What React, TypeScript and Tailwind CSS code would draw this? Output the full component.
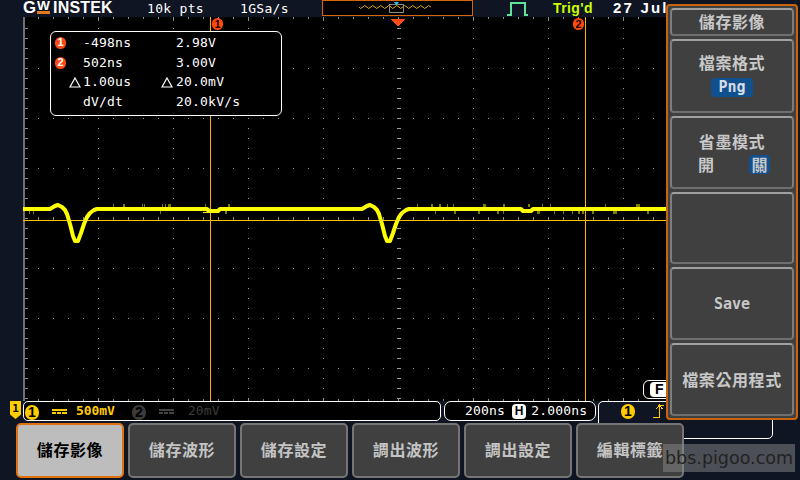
import React from "react";

const mono = "font-['DejaVu_Sans_Mono','Liberation_Mono',monospace]";
const cjk = "font-['Noto_Sans_CJK_TC','Noto_Sans_CJK_SC',sans-serif]";
const sans = "font-['Liberation_Sans',sans-serif]";

function range(a: number, b: number, s: number) {
  const out: number[] = [];
  for (let v = a; v <= b; v += s) out.push(v);
  return out;
}

const X0 = 23;
const Y0 = 17;

function dip(o: number) {
  const pts: [number, number][] = [
    [50, 209], [55, 206], [58, 205], [62, 207], [65, 210], [67, 214], [70, 224], [73, 236], [75, 241],
    [78, 241], [81, 233], [84, 224], [87, 217], [90, 213], [94, 210], [97, 209],
  ];
  return pts.map(([x, y]) => `L${x + o} ${y}`).join(" ");
}

const specksTop: [number, number][] = [
  [113, 1], [123, 2], [142, 1], [144, 1], [162, 1], [165, 1], [168, 3], [205, 1], [228, 2],
  [417, 1], [431, 2], [439, 2], [447, 1], [453, 1], [483, 3], [503, 2], [528, 2], [542, 1], [550, 1], [605, 1], [636, 4],
];
const specksBottom: [number, number][] = [
  [29, 1], [33, 1], [160, 1], [225, 2], [435, 1], [454, 2], [478, 2], [497, 2], [503, 1], [537, 3], [554, 1], [563, 1], [572, 1],
  [578, 2], [582, 2], [592, 2], [613, 4], [647, 2],
];

function ScopeGrid() {
  return (
    <svg width="645" height="384" viewBox="0 0 645 384" className="absolute inset-0" shapeRendering="crispEdges">
      {range(23, 645, 15).map((x) => (
        <rect key={"t" + x} x={x - X0} y={0} width={1} height={(x - 23) % 75 === 0 ? 4 : 2} fill="#8a8a8a" />
      ))}
      {range(23, 645, 15).map((x) => (
        <rect key={"b" + x} x={x - X0} y={382} width={1} height={2} fill="#8a8a8a" />
      ))}
      {range(28, 398, 10).map((y) => (
        <rect key={"l" + y} x={2} y={y - Y0} width={3} height={1} fill="#8a8a8a" />
      ))}
      {[68, 118, 168, 218, 268, 318, 368].map((y) =>
        range(38, 660, 15).map((x) => (
          <rect key={`r${y}-${x}`} x={x - X0} y={y - Y0 - (y === 218 ? 1 : 0)} width={1} height={y === 218 ? 3 : 1} fill={y === 218 ? "#8a8a8a" : "#a0a0a0"} />
        ))
      )}
      {[98, 173, 248, 323, 398, 473, 548, 623].map((x) =>
        range(28, 398, 10).map((y) => (
          <rect key={`c${x}-${y}`} x={x - X0 - (x === 398 ? 1 : 0)} y={y - Y0} width={x === 398 ? 4 : 1} height={1} fill="#a0a0a0" />
        ))
      )}
      <rect x={0} y={0} width={2} height={384} fill="#6f6f6f" />
      {specksTop.map(([x, w]) => (
        <rect key={"s" + x} x={x - X0} y={204 - Y0} width={w} height={3} fill="#7d7d00" />
      ))}
      {specksBottom.map(([x, w]) => (
        <rect key={"u" + x} x={x - X0} y={211 - Y0} width={w} height={3} fill="#7d7d00" />
      ))}
      <rect x={0} y={203} width={645} height={1} fill="#ffc400" />
      <rect x={187} y={0} width={1} height={384} fill="#ffb300" />
      <rect x={562} y={0} width={1} height={384} fill="#ffb300" />
      <rect x={203 - X0} y={212 - Y0} width={6} height={1} fill="#ffff00" />
      <g transform={`translate(${-X0} ${-Y0})`} shapeRendering="auto">
        <path
          d={`M23 209 ${dip(0)} L207 209 L209 211 L218 211 L220 209 ${dip(312)} L521 209 L523 211 L531 211 L533 209 L668 209`}
          stroke="#ffff00"
          strokeWidth={4}
          fill="none"
          strokeLinejoin="round"
        />
      </g>
      <polygon points="368,2 382,2 375,10" fill="#ff4a12" />
    </svg>
  );
}

function Dot({ n, top }: { n: string; top?: boolean }) {
  return (
    <span
      className={`flex items-center justify-center w-[11px] h-[12px] rounded-full bg-[#ff4a12] text-[11px] leading-none font-bold ${sans} ${top ? "text-[#1a0500]" : "text-white"}`}
    >
      {n}
    </span>
  );
}

function Delta() {
  return (
    <svg width="12" height="11" viewBox="0 0 12 11" className="ml-auto">
      <path d="M6 1 L11 10 H1 Z" fill="none" stroke="#fff" strokeWidth="1.2" />
    </svg>
  );
}

function Readout() {
  const rows: [React.ReactNode, string, React.ReactNode, string][] = [
    [<Dot n="1" />, "-498ns", null, "2.98V"],
    [<Dot n="2" />, "502ns", null, "3.00V"],
    [<Delta />, "1.00us", <Delta />, "20.0mV"],
    [null, "dV/dt", null, "20.0kV/s"],
  ];
  return (
    <div className={`absolute left-[27px] top-[14px] w-[232px] h-[85px] rounded-[6px] border border-white bg-black pl-[4px] pt-[1px] text-white text-[13px] font-medium ${mono}`}>
      {rows.map((r, i) => (
        <div key={i} className="flex items-center h-[19.7px]">
          <div className="w-[26px] flex items-center">{r[0]}</div>
          <div className="w-[80px] tracking-[0.2px] pl-[2px]">{r[1]}</div>
          <div className="w-[12px] flex items-center">{r[2]}</div>
          <div className="pl-[3px] tracking-[0.2px]">{r[3]}</div>
        </div>
      ))}
    </div>
  );
}

function MiniWave() {
  let d = "M36 6";
  for (let x = 36; x < 108; x += 4) d += ` q1 ${(x - 36) % 8 === 0 ? 3 : -3} 4 0`;
  return (
    <svg width="151" height="16" viewBox="0 0 151 16" className="absolute inset-0">
      <path d={d} stroke="#e8a800" strokeWidth="1" fill="none" />
      <rect x="66.5" y="3.5" width="14" height="8" fill="none" stroke="#8a8a8a" />
      <polygon points="71,1 76,1 73.5,4" fill="#22d3ee" />
    </svg>
  );
}

function Logo() {
  return (
    <div className={`w-[147px] pl-[23px] h-full flex items-start font-bold ${sans}`}>
      <span className="text-[16px] leading-[15px] w-[14px] scale-x-[1.05] origin-left">G</span>
      <span className="w-[16px] flex flex-col items-start">
        <span className="text-[13px] leading-[10px] mt-[1px] scale-x-[1.05] origin-left">W</span>
        <span className="w-[13px] h-[3px] bg-[#e07a1f]" />
      </span>
      <span className="text-[16px] leading-[15px] tracking-[0.2px]">INSTEK</span>
    </div>
  );
}

function Header() {
  return (
    <div className={`h-[17px] flex items-center text-white text-[13px] font-medium ${mono}`}>
      <Logo />
      <div className="w-[93px] tracking-[0.3px]">10k pts</div>
      <div className="w-[82px] tracking-[0.3px]">1GSa/s</div>
      <div className="w-[151px] h-[16px] -mt-[2px] border border-[#d9650c] relative bg-black">
        <MiniWave />
      </div>
      <svg width="22" height="17" viewBox="0 0 22 17" className="ml-[34px]">
        <path d="M0 15 H4 V3 H18 V15 H21" stroke="#5fe39a" strokeWidth="2" fill="none" />
      </svg>
      <div className={`pl-[24px] w-[84px] font-bold text-[#ccff00] text-[14px] tracking-[0.4px] whitespace-nowrap ${sans}`}>
        Trig&apos;d
      </div>
      <div className={`font-bold text-[15px] tracking-[2.2px] whitespace-nowrap ${sans}`}>27 Jul</div>
    </div>
  );
}

function Scope() {
  return (
    <div className="h-[384px] flex">
      <div className="w-[23px]" />
      <div className="w-[645px] relative bg-black overflow-hidden">
        <ScopeGrid />
        <Readout />
        <div className="absolute left-[189px] top-[1px]"><Dot n="1" top /></div>
        <div className="absolute left-[550px] top-[1px]"><Dot n="2" top /></div>
        <div className="absolute left-[620px] top-[363px] w-[30px] h-[19px] border border-white rounded-[6px] bg-black pl-[6px] pt-[1px]">
          <div className={`w-full h-[15px] bg-white rounded-[4px] text-black text-[14px] leading-[15px] font-bold pl-[5px] ${sans}`}>F</div>
        </div>
      </div>
    </div>
  );
}

function Dashes({ color }: { color: string }) {
  return (
    <svg width="15" height="5" viewBox="0 0 15 5" shapeRendering="crispEdges">
      <rect x="0" y="0" width="15" height="2" fill={color} />
      <rect x="0" y="3" width="4" height="2" fill={color} />
      <rect x="5" y="3" width="4" height="2" fill={color} />
      <rect x="10" y="3" width="5" height="2" fill={color} />
    </svg>
  );
}

function StatusBar() {
  const badge = `w-[14px] h-[15px] rounded-full text-black text-[14px] leading-[15px] text-center font-bold ${sans}`;
  return (
    <div className={`h-[22px] flex items-start text-[13px] font-medium ${mono}`}>
      <div className="w-[23px] flex justify-end pr-[2px]">
        <div className="w-[11px] h-[18px] bg-[#ffcc00] text-black text-[11px] leading-[15px] text-center font-bold [clip-path:polygon(0_0,100%_0,100%_75%,50%_100%,0_75%)]">
          1
        </div>
      </div>
      <div className="w-[418px] h-[20px] rounded-[5px] border border-white flex items-center bg-black pl-[1px]">
        <span className={`${badge} bg-[#ffcc00] mt-[2px]`}>1</span>
        <span className="ml-[13px] flex"><Dashes color="#ffcc00" /></span>
        <span className="ml-[9px] text-[#ffcc00] font-bold tracking-[-0.05px]">500mV</span>
        <span className={`${badge} ml-[17px] bg-[#3a3a3a] mt-[2px]`}>2</span>
        <span className="ml-[13px] flex"><Dashes color="#444444" /></span>
        <span className="ml-[14px] text-[#3d3d3d] tracking-[0.1px]">20mV</span>
      </div>
      <div className="ml-[3px] w-[152px] h-[20px] rounded-[7px] border border-white flex items-center pl-[20px] text-white bg-black">
        <span className="tracking-[0.2px]">200ns</span>
        <span className={`ml-[7px] mr-[5px] w-[14px] h-[15px] rounded-[4px] bg-white text-black text-[12px] leading-[15px] font-bold text-center ${sans}`}>H</span>
        <span className="tracking-[0.2px]">2.000ns</span>
      </div>
      <div className="ml-[2px] w-[175px] h-[38px] rounded-[5px] border border-white flex items-start pl-[22px] pt-[2px]">
        <span className={`${badge} bg-[#ffcc00]`}>1</span>
        <svg width="11" height="14" viewBox="0 0 11 14" className="ml-[18px]" shapeRendering="crispEdges">
          <path d="M0 13.5 H6.5 V1.5 H11 M3.5 5 L6.5 1 L9.5 5" stroke="#ffcc00" fill="none" />
        </svg>
      </div>
    </div>
  );
}

function SoftKey({ label, active }: { label: string; active?: boolean }) {
  return (
    <div
      className={`w-[108px] h-[55px] pb-[3px] rounded-[5px] flex items-center justify-center text-[16px] font-bold tracking-[0.6px] border-2 ${cjk} ${
        active ? "bg-[#bdbdbd] border-[#e0730f] text-black" : "bg-[#404040] border-[#757575] text-[#c4c4c4]"
      }`}
    >
      {label}
    </div>
  );
}

function BottomKeys() {
  return (
    <div className="flex gap-[4px] pl-[16px] relative z-10">
      <SoftKey label="儲存影像" active />
      <SoftKey label="儲存波形" />
      <SoftKey label="儲存設定" />
      <SoftKey label="調出波形" />
      <SoftKey label="調出設定" />
      <SoftKey label="編輯標籤" />
    </div>
  );
}

function MenuBox({ h, className, children }: { h: string; className?: string; children?: React.ReactNode }) {
  return (
    <div className={`${h} ${className ?? "justify-center"} rounded-[4px] border-2 border-t-[#a0a0a0] border-x-[#7d7d7d] border-b-[#6f6f6f] flex flex-col items-center`}>
      {children}
    </div>
  );
}

function SideMenu() {
  const monoBold = `${mono} text-[15px] font-bold tracking-normal leading-[18px]`;
  return (
    <div className={`absolute left-[666px] top-[4px] w-[132px] h-[416px] z-20 rounded-[4px] border-2 border-[#c9640e] bg-[#404040] px-[2px] pt-[2px] flex flex-col gap-[3px] text-[#c8c8c8] text-[16px] leading-[20px] font-bold tracking-[0.6px] ${cjk}`}>
      <MenuBox h="h-[28px] pb-[2px]">儲存影像</MenuBox>
      <MenuBox h="h-[74px]" className="justify-start pt-[11px]">
        <div>檔案格式</div>
        <div className={`mt-[6px] w-[42px] h-[19px] text-center rounded-[4px] bg-[#11508f] text-[#d5dde5] ${monoBold}`}>Png</div>
      </MenuBox>
      <MenuBox h="h-[73px]" className="justify-start pt-[13px]">
        <div>省墨模式</div>
        <div className="mt-[3px] ml-[4px] w-[72px] flex items-center justify-between">
          <span className="tracking-normal">開</span>
          <span className="w-[21px] h-[19px] leading-[19px] text-center rounded-[4px] bg-[#11508f] tracking-normal">關</span>
        </div>
      </MenuBox>
      <MenuBox h="h-[72px]" />
      <MenuBox h="h-[73px]">
        <span className={monoBold}>Save</span>
      </MenuBox>
      <MenuBox h="h-[73px]" className="justify-center pb-[2px]">檔案公用程式</MenuBox>
    </div>
  );
}

export default function App() {
  return (
    <div className="relative w-[800px] h-[480px] overflow-hidden bg-[#0f1522]">
      <Header />
      <Scope />
      <StatusBar />
      <BottomKeys />
      <SideMenu />
      <div className="absolute left-[663px] top-[444px] z-30 w-[132px] h-[28px] bg-[#8a8a8a]/50 text-[#222222] text-[17.5px] leading-[28px] text-center font-['DejaVu_Sans',sans-serif] whitespace-nowrap">
        bbs.pigoo.com
      </div>
    </div>
  );
}
